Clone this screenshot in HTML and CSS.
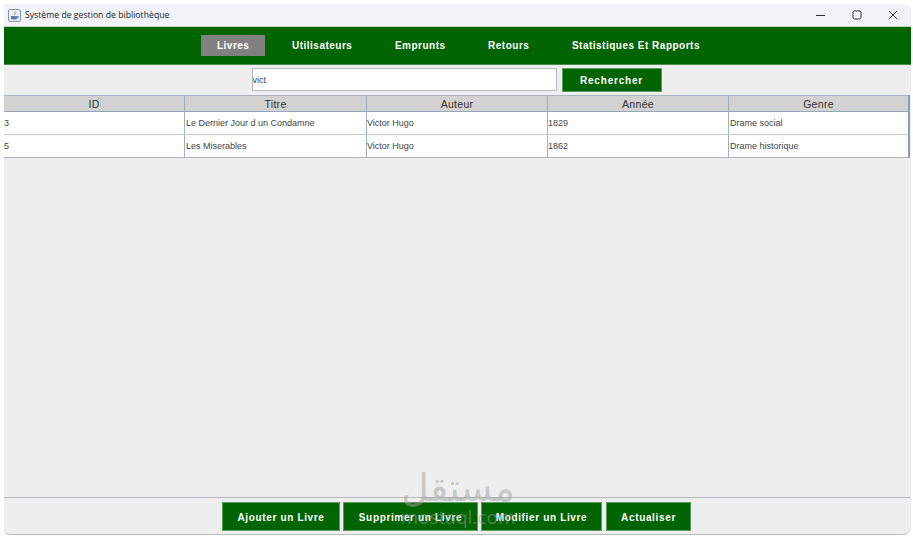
FILE: index.html
```html
<!DOCTYPE html>
<html lang="fr">
<head>
  <meta charset="UTF-8">
  <meta name="viewport" content="width=device-width, initial-scale=1.0">
  <title>Système de gestion de bibliothèque</title>
  <link rel="stylesheet" href="styles.css">
</head>
<body>

<div class="window">
  <!-- Barre de titre -->
  <div class="titlebar">
    <svg class="app-icon" width="13" height="13" viewBox="0 0 13 13">
      <rect x="0.5" y="0.5" width="12" height="12" rx="1.5" fill="#e8eef4" stroke="#8c96a6"/>
      <path d="M7 2.5c-1 1.2 1 1.8 0 3.2" fill="none" stroke="#d0782c"/>
      <path d="M3 7h6v2.2c0 .8-.6 1.3-1.3 1.3H4.300C3.600 10.500 3 10 3 9.200z" fill="#5b7fa8"/>
      <path d="M9 7.500h1.300v1.300H9" fill="none" stroke="#5b7fa8" stroke-width="0.800"/>
    </svg>
    <span class="title-text">Système de gestion de bibliothèque</span>
    <div class="window-controls">
      <svg width="10" height="10" viewBox="0 0 10 10"><path d="M0 5.500h9" stroke="#333" fill="none"/></svg>
      <svg width="10" height="10" viewBox="0 0 10 10"><rect x="1" y="1" width="8" height="8" rx="1.500" stroke="#333" fill="none"/></svg>
      <svg width="10" height="10" viewBox="0 0 10 10"><path d="M1 1l8 8M9 1l-8 8" stroke="#333" fill="none"/></svg>
    </div>
  </div>

  <!-- Menu principal -->
  <nav class="nav">
    <a class="nav-item active">Livres</a>
    <a class="nav-item">Utilisateurs</a>
    <a class="nav-item">Emprunts</a>
    <a class="nav-item">Retours</a>
    <a class="nav-item">Statistiques Et Rapports</a>
  </nav>

  <!-- Recherche -->
  <div class="search-row">
    <input class="search-input" type="text" value="vict">
    <button class="green-button search-button">Rechercher</button>
  </div>

  <!-- Table des livres -->
  <div class="table">
    <div class="table-row table-head">
      <div class="cell">ID</div>
      <div class="cell">Titre</div>
      <div class="cell">Auteur</div>
      <div class="cell">Année</div>
      <div class="cell">Genre</div>
    </div>
    <div class="table-row">
      <div class="cell">3</div>
      <div class="cell">Le Dernier Jour d un Condamne</div>
      <div class="cell">Victor Hugo</div>
      <div class="cell">1829</div>
      <div class="cell">Drame social</div>
    </div>
    <div class="table-row">
      <div class="cell">5</div>
      <div class="cell">Les Miserables</div>
      <div class="cell">Victor Hugo</div>
      <div class="cell">1862</div>
      <div class="cell">Drame historique</div>
    </div>
  </div>

  <!-- Boutons d'action -->
  <div class="actions">
    <button class="green-button action-add">Ajouter un Livre</button>
    <button class="green-button action-delete">Supprimer un Livre</button>
    <button class="green-button action-edit">Modifier un Livre</button>
    <button class="green-button action-refresh">Actualiser</button>
  </div>

  <div class="watermark">
    <div class="watermark-ar">مستقل</div>
    <div class="watermark-en">mostaql.com</div>
  </div>
</div>

</body>
</html>
```

FILE: styles.css
```css
html, body {
  height: 100%;
}
body {
  margin: 0;
  padding: 4px 2px 4px 4px;
  box-sizing: border-box;
  background-color: #ffffff;
  font-family: "Liberation Sans", Arial, sans-serif;
  overflow: hidden;
}
.window {
  position: relative;
  height: 530px;
  display: flex;
  flex-direction: column;
  background-color: #eeeeee;
  border-bottom: 1px solid #b8bcc0;
  border-radius: 0 8px 8px 6px;
  overflow: hidden;
}
.titlebar {
  height: 22px;
  flex: none;
  display: flex;
  align-items: center;
  padding-left: 4px;
  background-color: #f1f3f9;
  border-bottom: 1px solid #c4d0c4;
}
.app-icon {
  margin-right: 4px;
}
.title-text {
  font-family: "Open Sans", sans-serif;
  font-size: 8.700px;
  color: #222222;
}
.window-controls {
  margin-left: auto;
  display: flex;
  gap: 26px;
  padding-right: 13px;
}
.nav {
  height: 37px;
  flex: none;
  display: flex;
  justify-content: center;
  align-items: center;
  gap: 10.500px;
  padding-left: 2px;
  background-color: #006400;
  border-bottom: 1px solid #4c8c4c;
}
.nav-item {
  padding: 5px 16px;
  color: #ffffff;
  font-size: 10px;
  line-height: 11px;
  font-weight: bold;
  letter-spacing: 0.500px;
}
.nav-item.active {
  background-color: #808080;
}
.search-row {
  height: 30px;
  flex: none;
  display: flex;
  justify-content: center;
  align-items: flex-start;
  gap: 5px;
  padding: 3px 2px 0 0;
  box-sizing: border-box;
}
.search-input {
  width: 305px;
  height: 23px;
  box-sizing: border-box;
  padding: 0;
  border: 1px solid #b4bcc4;
  background-color: #ffffff;
  font-family: "Liberation Sans", Arial, sans-serif;
  font-size: 9px;
  color: #444444;
}
.green-button {
  height: 29px;
  padding: 1px 0 0;
  border: 1px solid #5c9c5c;
  background-color: #006400;
  color: #ffffff;
  font-family: "Liberation Sans", Arial, sans-serif;
  font-size: 10px;
  font-weight: bold;
  letter-spacing: 0.650px;
}
.search-button {
  width: 100px;
  height: 24px;
  letter-spacing: 0.800px;
}
.table {
  flex: none;
  margin-right: 1px;
  border-bottom: 1px solid #aab4c0;
  border-right: 2px solid #8c9cb0;
}
.table-row {
  display: grid;
  grid-template-columns: 181px 182px 181px 181px 1fr;
  height: 23px;
  background-color: #ffffff;
  border-bottom: 1px solid #c8ccd4;
  box-sizing: border-box;
  font-size: 9px;
  color: #444444;
}
.table-row:last-child {
  border-bottom: none;
  height: 22px;
}
.table-head {
  height: 17px;
  background-color: #d2d2d2;
  border-top: 1px solid #aab4c0;
  border-bottom: 1px solid #9aa6b4;
  font-size: 10.500px;
  letter-spacing: 0.300px;
  color: #333333;
}
.table-head .cell {
  justify-content: center;
}
.cell {
  display: flex;
  align-items: center;
  border-right: 1px solid #a0aec0;
}
.table-row:not(.table-head) .cell:nth-child(2),
.table-row:not(.table-head) .cell:nth-child(5) {
  padding-left: 1px;
}
.cell:last-child {
  border-right: none;
}
.actions {
  margin-top: auto;
  height: 37px;
  flex: none;
  display: flex;
  justify-content: center;
  align-items: flex-start;
  gap: 3px;
  padding: 4px 2px 0 0;
  box-sizing: border-box;
  border-top: 1px solid #b4b8bc;
}
.action-add {
  width: 118px;
}
.action-delete {
  width: 135px;
}
.action-edit {
  width: 121px;
}
.action-refresh {
  width: 85px;
  margin-left: 1px;
}
.watermark {
  position: absolute;
  left: 392px;
  top: 464px;
  width: 124px;
  text-align: center;
  color: rgba(160, 160, 160, 0.5);
  pointer-events: none;
}
.watermark-ar {
  font-family: "DejaVu Sans", sans-serif;
  font-size: 38px;
  line-height: 40px;
}
.watermark-en {
  font-family: "Open Sans", sans-serif;
  font-size: 19px;
  line-height: 18px;
}
```
